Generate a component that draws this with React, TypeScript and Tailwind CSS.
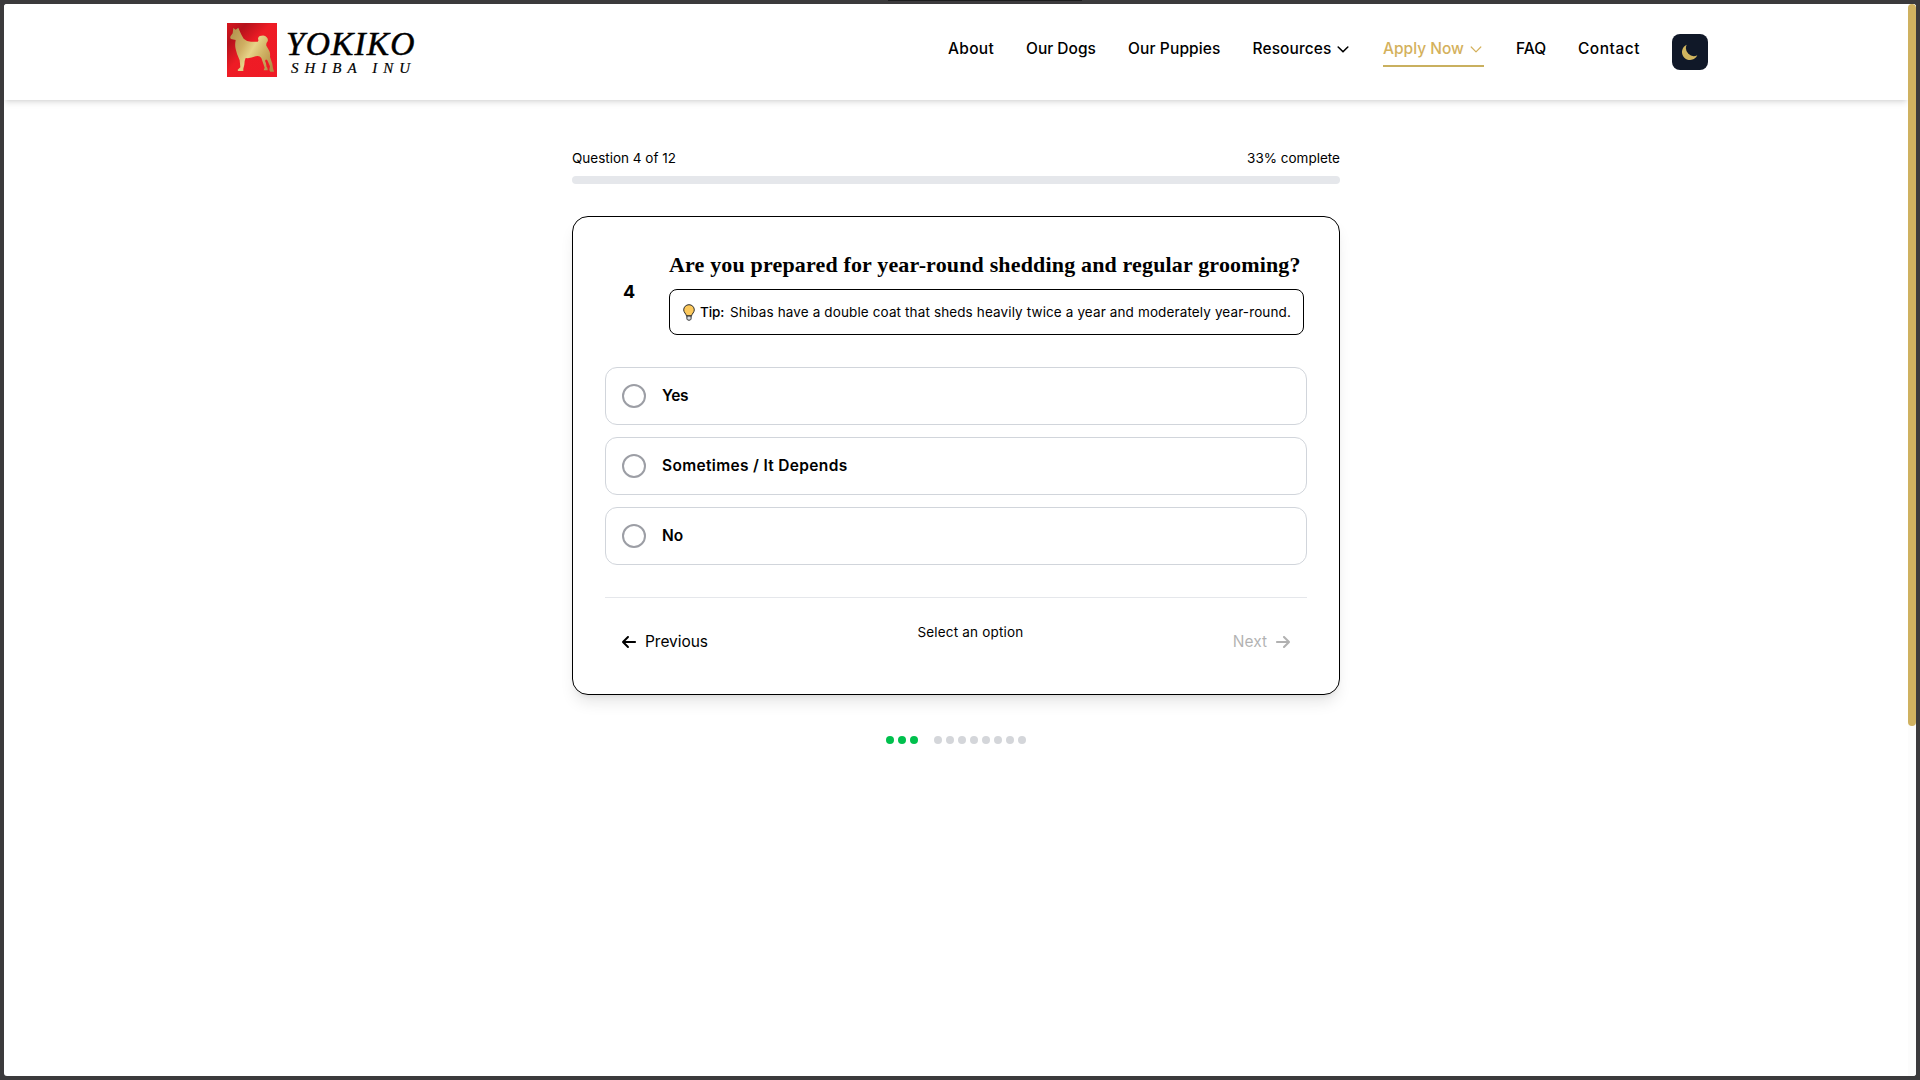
import { FaArrowLeft, FaArrowRight } from "react-icons/fa6";

function Logo() {
  return (
    <div className="mt-[19px] flex">
      <svg className="h-[54px] w-[50px] shrink-0" viewBox="0 0 150 162">
        <defs>
          <linearGradient id="red" x1="0" y1="0" x2="1" y2="1">
            <stop offset="0" stopColor="#d8161d" />
            <stop offset="0.2" stopColor="#b5121b" />
            <stop offset="0.45" stopColor="#ee1c25" />
            <stop offset="1" stopColor="#ef1a26" />
          </linearGradient>
          <linearGradient id="gold" x1="0" y1="0.2" x2="1" y2="0.8">
            <stop offset="0" stopColor="#b59550" />
            <stop offset="0.3" stopColor="#cfae62" />
            <stop offset="0.5" stopColor="#e6d388" />
            <stop offset="0.72" stopColor="#cfb264" />
            <stop offset="1" stopColor="#b58d45" />
          </linearGradient>
        </defs>
        <rect width="150" height="162" fill="url(#red)" />
        <path
          fill="url(#gold)"
          d="M19 15 L26 20 L34 14 L38 24 Q43 36 50 47 Q58 55 72 56 L92 56 Q96 54 93 47 Q94 38 103 38 Q114 35 119 43 Q126 50 120 58 Q117 62 118 68 Q123 76 128 86 Q130 93 129 102 Q133 113 136 122 Q137 134 141 146 L130 146 L127 141 L129 130 L121 112 Q116 106 114 114 Q119 122 118 130 Q123 136 122 142 L110 142 L113 134 L108 119 L103 105 Q98 97 86 100 Q70 107 56 105 Q52 113 52 125 L49 137 L49 144 L33 144 L32 140 L40 133 L38 112 Q29 94 26 78 Q23 67 26 51 L12 48 Q8 45 11 39 L17 31 Z"
        />
      </svg>
      <div className="ml-[9px] w-[141px] pt-[5px] font-['Liberation_Serif',serif] whitespace-pre text-black italic">
        <div className="text-[33.5px] leading-[32px] tracking-[1.1px] [-webkit-text-stroke:0.5px_black]">YOKIKO</div>
        <div className="ml-[5px] text-[15px] leading-[16px] tracking-[6px] [-webkit-text-stroke:0.2px_black]">SHIBA INU</div>
      </div>
    </div>
  );
}

function Chevron({ thin = false }: { thin?: boolean }) {
  return (
    <svg className="size-4 shrink-0" viewBox="0 0 16 16" fill="none" stroke="currentColor" strokeWidth={thin ? 1.2 : 1.6} strokeLinecap="round" strokeLinejoin="round">
      <path d="M3.2 6 L8 10.8 L12.8 6" />
    </svg>
  );
}

function Nav() {
  const link = "whitespace-nowrap shrink-0 mt-[3px] leading-6";
  return (
    <nav className="flex items-start gap-8 pt-[30px] text-[15.5px] font-medium text-black">
      <a className={`${link} w-[46px] tracking-[0.29px]`}>About</a>
      <a className={`${link} w-[70px]`}>Our Dogs</a>
      <a className={`${link} w-[92.5px] tracking-[0.13px]`}>Our Puppies</a>
      <a className={`${link} flex w-[98.5px] items-center gap-1 tracking-[0.1px]`}>
        <span className="w-[78.5px]">Resources</span>
        <Chevron />
      </a>
      <a className={`${link} flex w-[101px] items-center gap-1 border-b-2 border-[#c9b05f] pb-1 text-[#d4b15c]`}>
        <span className="w-[81px]">Apply Now</span>
        <Chevron thin />
      </a>
      <a className={`${link} w-[30px]`}>FAQ</a>
      <a className={`${link} w-[62px] tracking-[0.5px]`}>Contact</a>
      <button className="flex size-9 items-center justify-center rounded-lg bg-[#101828]">
        <svg className="size-5" viewBox="0 0 20 20" fill="#d0b45e">
          <path d="M17.293 13.293A8 8 0 016.707 2.707a8.001 8.001 0 1010.586 10.586z" />
        </svg>
      </button>
    </nav>
  );
}

function Bulb() {
  return (
    <svg className="mt-[2px] ml-px h-[17px] w-[12px] shrink-0" viewBox="0 0 12 17">
      <path d="M6 0.7C3 .7.7 3 .7 5.9c0 2.4 2.3 3.8 2.8 6h5c.5-2.2 2.8-3.6 2.8-6C11.3 3 9 .7 6 .7z" fill="#fcc95c" stroke="#2b2b2b" strokeWidth="1" />
      <path d="M3.9 12v2.6c0 1 .7 1.6 2.1 1.6s2.1-.6 2.1-1.6V12z" fill="#d9dde0" stroke="#2b2b2b" strokeWidth="1" />
    </svg>
  );
}

const options = [
  { label: "Yes", cls: "tracking-[-0.4px]" },
  { label: "Sometimes / It Depends", cls: "tracking-[0.33px]" },
  { label: "No", cls: "tracking-[-0.1px]" },
];

const dots = Array.from({ length: 12 }, (_, i) => (i < 3 ? "bg-[#00c04d]" : i === 3 ? "bg-transparent" : "bg-[#d4d6da]"));

function Quiz() {
  return (
    <main className="mx-auto w-[768px] pt-12 text-black">
      <div className="mb-2 flex justify-between text-[13.5px] leading-5">
        <span>Question 4 of 12</span>
        <span>33% complete</span>
      </div>
      <div className="h-2 rounded-full bg-[#e5e7eb]" />

      <section className="mt-8 rounded-2xl border border-black bg-white p-8 shadow-lg">
        <div className="flex items-center gap-4">
          <div className="w-12 shrink-0 text-center text-lg font-bold">4</div>
          <div className="w-[635px]">
            <h2 className="mb-2 font-['Liberation_Serif',serif] text-[22px] leading-8 font-bold tracking-[0.16px] whitespace-nowrap">
              Are you prepared for year-round shedding and regular grooming?
            </h2>
            <div className="flex rounded-lg border border-black p-3 text-[13.5px] leading-5 whitespace-nowrap">
              <Bulb />
              <span className="ml-[5px] w-[32px] font-medium tracking-[-0.1px]">Tip:</span>
              <span className="tracking-[0.124px]">Shibas have a double coat that sheds heavily twice a year and moderately year-round.</span>
            </div>
          </div>
        </div>

        <div className="mt-8 flex flex-col gap-3">
          {options.map((o) => (
            <div key={o.label} className="flex items-center gap-4 rounded-xl border border-[#d1d5db] p-4">
              <span className="size-6 rounded-full border-2 border-[#9c9ea5]" />
              <span className={`text-[15.5px] leading-6 font-semibold ${o.cls}`}>{o.label}</span>
            </div>
          ))}
        </div>

        <div className="mt-8 flex items-start justify-between border-t border-[#e5e7eb] pt-6 text-[15.5px] leading-6">
          <button className="flex items-center gap-2 px-4 py-2">
            <FaArrowLeft size={16} />
            <span className="tracking-[-0.04px]">Previous</span>
          </button>
          <span className="text-[13.5px] leading-5 tracking-[0.18px]">Select an option</span>
          <button className="flex items-center gap-2 px-4 py-2 opacity-30">
            Next
            <FaArrowRight size={16} />
          </button>
        </div>
      </section>

      <div className="mt-[41px] flex justify-center gap-1">
        {dots.map((d, i) => (
          <span key={i} className={`size-2 rounded-full ${d}`} />
        ))}
      </div>
    </main>
  );
}

export default function App() {
  return (
    <div className="relative h-[1080px] w-[1920px] overflow-hidden bg-[#3b3a3c] p-1 font-['Inter',sans-serif]">
      <div className="absolute top-0 left-[888px] h-px w-[194px] bg-[#1c1c1d]" />
      <div className="flex h-full overflow-hidden rounded-[3px] bg-white">
        <div className="flex-1">
          <header className="h-24 bg-white shadow-md">
            <div className="mx-auto flex w-[1504px] justify-between pl-[23px]">
              <Logo />
              <Nav />
            </div>
          </header>
          <Quiz />
        </div>
        <div className="w-2 bg-[#fcfcfc]">
          <div className="h-[722px] rounded-full bg-[#cfb160]" />
        </div>
      </div>
    </div>
  );
}
